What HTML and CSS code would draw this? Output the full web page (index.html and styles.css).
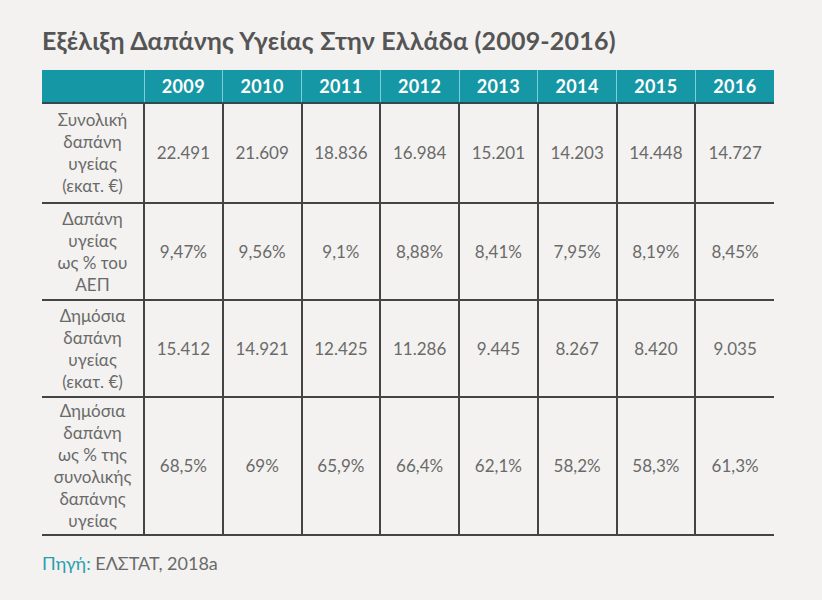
FILE: index.html
```html
<!DOCTYPE html>
<html lang="el">
<head>
<meta charset="utf-8">
<link rel="stylesheet" href="styles.css">
</head>
<body>
<div class="page">
  <h1 class="title">Εξέλιξη Δαπάνης Υγείας Στην Ελλάδα (2009-2016)</h1>
  <table class="data">
    <colgroup>
      <col class="c-label">
      <col><col><col><col><col><col><col><col>
    </colgroup>
    <thead>
      <tr class="head">
        <th></th><th>2009</th><th>2010</th><th>2011</th><th>2012</th><th>2013</th><th>2014</th><th>2015</th><th>2016</th>
      </tr>
    </thead>
    <tbody>
      <tr class="r1">
        <td class="label">Συνολική<br>δαπάνη<br>υγείας<br>(εκατ. €)</td>
        <td>22.491</td><td>21.609</td><td>18.836</td><td>16.984</td><td>15.201</td><td>14.203</td><td>14.448</td><td>14.727</td>
      </tr>
      <tr class="r2">
        <td class="label">Δαπάνη<br>υγείας<br>ως % του<br>ΑΕΠ</td>
        <td>9,47%</td><td>9,56%</td><td>9,1%</td><td>8,88%</td><td>8,41%</td><td>7,95%</td><td>8,19%</td><td>8,45%</td>
      </tr>
      <tr class="r3">
        <td class="label">Δημόσια<br>δαπάνη<br>υγείας<br>(εκατ. €)</td>
        <td>15.412</td><td>14.921</td><td>12.425</td><td>11.286</td><td>9.445</td><td>8.267</td><td>8.420</td><td>9.035</td>
      </tr>
      <tr class="r4">
        <td class="label">Δημόσια<br>δαπάνη<br>ως % της<br>συνολικής<br>δαπάνης<br>υγείας</td>
        <td>68,5%</td><td>69%</td><td>65,9%</td><td>66,4%</td><td>62,1%</td><td>58,2%</td><td>58,3%</td><td>61,3%</td>
      </tr>
    </tbody>
  </table>
  <p class="source"><span class="src-key">Πηγή:</span> ΕΛΣΤΑΤ, 2018a</p>
</div>
</body>
</html>
```

FILE: styles.css
```css
html, body {
  margin: 0;
  padding: 0;
  background: #f3f2f0;
}
body {
  font-family: Lato, "Open Sans", "Noto Sans", sans-serif;
  color: #6a6a6a;
}
.page {
  padding: 26px 0 0 42px;
  width: 732px;
}
.title {
  margin: 0 0 16px 0;
  font-size: 25px;
  line-height: 28px;
  font-weight: 700;
  color: #555555;
  letter-spacing: 0.2px;
}
.data {
  width: 732px;
  table-layout: fixed;
  border-collapse: collapse;
}
.c-label {
  width: 102px;
}
.data th, .data td {
  padding: 0;
  text-align: center;
  vertical-align: middle;
}
.head {
  height: 33px;
  background: #1697a6;
}
.head th {
  color: #ffffff;
  font-size: 18px;
  font-weight: 700;
  letter-spacing: 0.4px;
  border-left: 1px solid #79d0da;
  border-bottom: 2px solid #2f4a50;
}
.head th:first-child {
  border-left: none;
}
.data td {
  font-size: 17px;
  line-height: 22px;
  color: #6a6a6a;
  border-left: 2px solid #444444;
  border-bottom: 2px solid #444444;
}
.data td.label {
  border-left: none;
}
.r1 { height: 100px; }
.r2 { height: 97px; }
.r3 { height: 97px; }
.r4 { height: 138px; }
.source {
  margin: 16px 0 0 0;
  font-size: 18px;
  color: #6a6a6a;
}
.src-key {
  color: #2a9fae;
}
```
